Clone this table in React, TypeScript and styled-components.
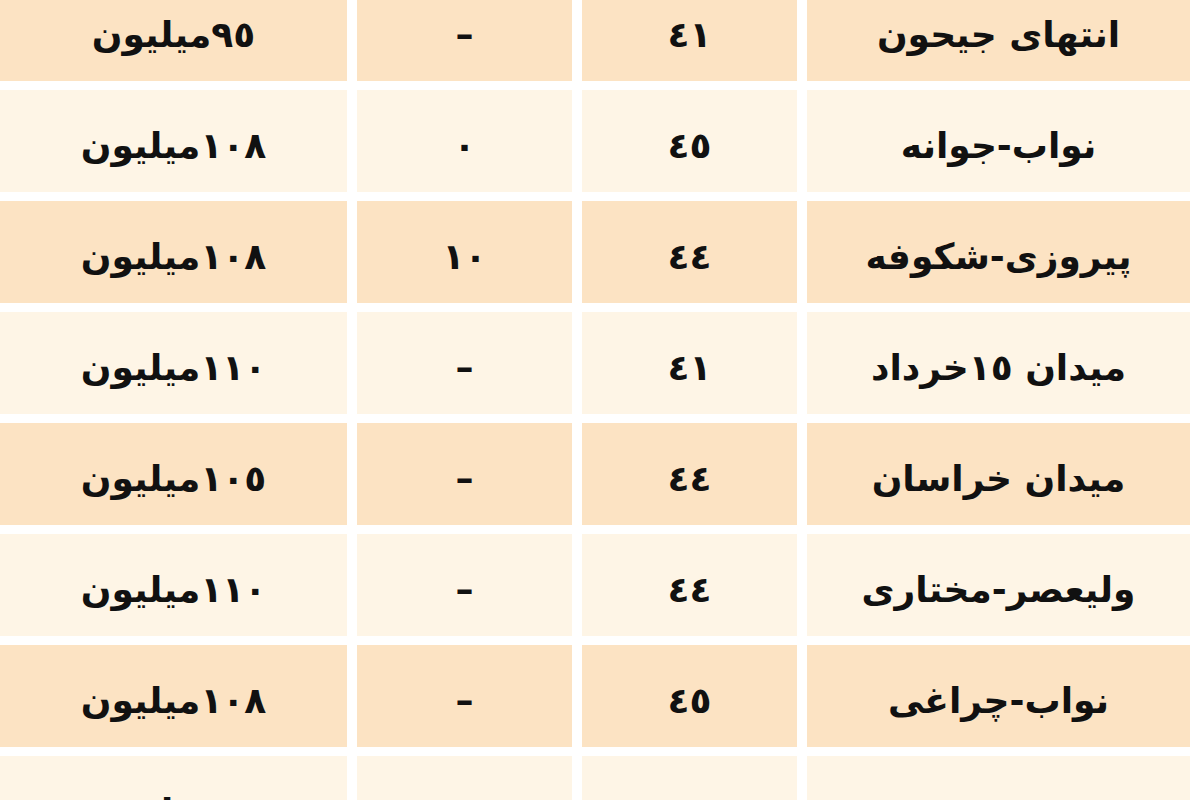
import React from 'react'
import styled, { createGlobalStyle } from 'styled-components'

type PriceRow = {
    place: string
    area: string
    age: string
    price: string
}

const rows: PriceRow[] = [
    { place: 'انتهای جیحون', area: '٤١', age: '–', price: '٩٥میلیون' },
    { place: 'نواب-جوانه', area: '٤٥', age: '٠', price: '١٠٨میلیون' },
    { place: 'پیروزی-شکوفه', area: '٤٤', age: '١٠', price: '١٠٨میلیون' },
    { place: 'میدان ١٥خرداد', area: '٤١', age: '–', price: '١١٠میلیون' },
    { place: 'میدان خراسان', area: '٤٤', age: '–', price: '١٠٥میلیون' },
    { place: 'ولیعصر-مختاری', area: '٤٤', age: '–', price: '١١٠میلیون' },
    { place: 'نواب-چراغی', area: '٤٥', age: '–', price: '١٠٨میلیون' },
    { place: '', area: '', age: '', price: '٩٦میلیون' },
]

export default function App(): JSX.Element {
    return (
        <>
            <GlobalStyle />
            <Page>
                <Table dir="rtl">
                    {rows.map((row, i) => (
                        <Row key={i}>
                            <Cell $dark={i % 2 === 0}>{row.place}</Cell>
                            <Cell $dark={i % 2 === 0}>{row.area}</Cell>
                            <Cell $dark={i % 2 === 0}>{row.age}</Cell>
                            <Cell $dark={i % 2 === 0}>{row.price}</Cell>
                        </Row>
                    ))}
                </Table>
            </Page>
        </>
    )
}

const GlobalStyle = createGlobalStyle`
    html, body {
        margin: 0;
        padding: 0;
        background: #ffffff;
    }
`

const Page = styled.div`
    width: 1200px;
    height: 800px;
    overflow: hidden;
    background: #ffffff;
`

const Table = styled.div`
    display: flex;
    flex-direction: column;
    gap: 9px;
    margin-top: -21px;
    padding-right: 10px;
`

const Row = styled.div`
    display: grid;
    grid-template-columns: 383px 215px 215px 347px;
    column-gap: 10px;
    height: 102px;
`

const Cell = styled.div<{ $dark: boolean }>`
    display: flex;
    align-items: center;
    justify-content: center;
    padding-top: 8px;
    box-sizing: border-box;
    background: ${(p) => (p.$dark ? '#fce3c3' : '#fef5e6')};
    font-family: 'DejaVu Sans', sans-serif;
    font-weight: bold;
    font-size: 36px;
    color: #111111;
    white-space: nowrap;
`
